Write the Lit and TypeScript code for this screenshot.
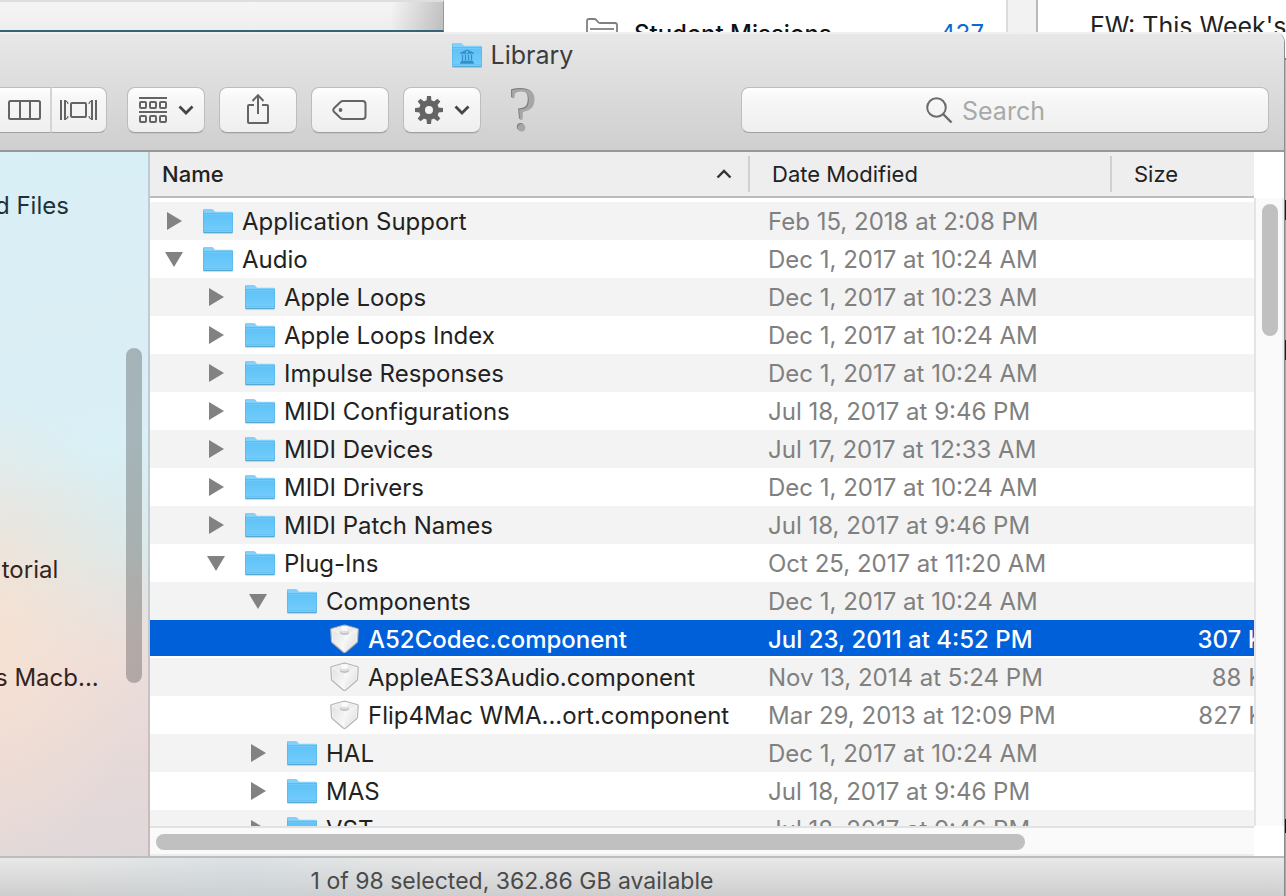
import { LitElement, html, css, svg, nothing } from "lit";
import { customElement, property } from "lit/decorators.js";

interface Entry {
  name: string;
  date: string;
  level: number;
  kind: "closed" | "open" | "component";
  size?: string;
  selected?: boolean;
}

const ENTRIES: Entry[] = [
  { name: "Application Support", date: "Feb 15, 2018 at 2:08 PM", level: 0, kind: "closed" },
  { name: "Audio", date: "Dec 1, 2017 at 10:24 AM", level: 0, kind: "open" },
  { name: "Apple Loops", date: "Dec 1, 2017 at 10:23 AM", level: 1, kind: "closed" },
  { name: "Apple Loops Index", date: "Dec 1, 2017 at 10:24 AM", level: 1, kind: "closed" },
  { name: "Impulse Responses", date: "Dec 1, 2017 at 10:24 AM", level: 1, kind: "closed" },
  { name: "MIDI Configurations", date: "Jul 18, 2017 at 9:46 PM", level: 1, kind: "closed" },
  { name: "MIDI Devices", date: "Jul 17, 2017 at 12:33 AM", level: 1, kind: "closed" },
  { name: "MIDI Drivers", date: "Dec 1, 2017 at 10:24 AM", level: 1, kind: "closed" },
  { name: "MIDI Patch Names", date: "Jul 18, 2017 at 9:46 PM", level: 1, kind: "closed" },
  { name: "Plug-Ins", date: "Oct 25, 2017 at 11:20 AM", level: 1, kind: "open" },
  { name: "Components", date: "Dec 1, 2017 at 10:24 AM", level: 2, kind: "open" },
  { name: "A52Codec.component", date: "Jul 23, 2011 at 4:52 PM", level: 3, kind: "component", size: "307 KB", selected: true },
  { name: "AppleAES3Audio.component", date: "Nov 13, 2014 at 5:24 PM", level: 3, kind: "component", size: "88 KB" },
  { name: "Flip4Mac WMA...ort.component", date: "Mar 29, 2013 at 12:09 PM", level: 3, kind: "component", size: "827 KB" },
  { name: "HAL", date: "Dec 1, 2017 at 10:24 AM", level: 2, kind: "closed" },
  { name: "MAS", date: "Jul 18, 2017 at 9:46 PM", level: 2, kind: "closed" },
  { name: "VST", date: "Jul 18, 2017 at 9:46 PM", level: 2, kind: "closed" },
];

const folderIcon = (library = false) => html`
  <svg class="icon" width="32" height="28" viewBox="0 0 32 28" aria-hidden="true">
    <defs>
      <linearGradient id="f" x1="0" y1="0" x2="0" y2="1">
        <stop offset="0" stop-color="#5fc2f6" />
        <stop offset="1" stop-color="#74cefb" />
      </linearGradient>
    </defs>
    <path d="M1.500 26.500h29" stroke="#000" stroke-opacity=".14" />
    <path d="M1 3.200Q1 2 2.200 2h7.600q.9 0 1.500.7l1.300 1.500q.5.600 1.400.600h15.800q1.200 0 1.200 1.200V25q0 1-1 1H2q-1 0-1-1z" fill="#80d2fc" />
    <path d="M1 7.500h30V25q0 1-1 1H2q-1 0-1-1z" fill="url(#f)" />
    <path d="M1 6.500h30" stroke="#55b3e4" stroke-opacity=".75" />
    <path d="M1 23.500h30" stroke="#60bcec" stroke-opacity=".6" />
    <path d="M1.500 25.500h29" stroke="#56a9d4" />
    <path d="M1.500 3V25M30.500 6V25" stroke="#4fb0e4" stroke-opacity=".5" fill="none" />
    ${library
      ? svg`<path d="M16 8.500l7 3.300v.9H9v-.9z" fill="#338fca"/>
            <circle cx="16" cy="11" r="1" fill="#74cbf8"/>
            <path d="M11.500 13.500v6M14.500 13.500v6M17.500 13.500v6M20.500 13.500v6" stroke="#338fca" stroke-width="1.300"/>
            <path d="M10 20.500h12M9 22h14" stroke="#338fca" stroke-width="1.400"/>`
      : nothing}
  </svg>`;

const componentIcon = html`
  <svg class="icon" width="32" height="30" viewBox="0 0 32 30" aria-hidden="true">
    <defs>
      <linearGradient id="l" x1="0" y1="0" x2="1" y2="1">
        <stop offset="0" stop-color="#e2e2e2" />
        <stop offset="1" stop-color="#fcfcfc" />
      </linearGradient>
      <linearGradient id="r" x1="0" y1="0" x2="1" y2="1">
        <stop offset="0" stop-color="#ffffff" />
        <stop offset="1" stop-color="#dcdcdc" />
      </linearGradient>
    </defs>
    <path d="M2.800 5.500Q3 4.800 4 4.500L14.500 1.500q2-.6 4 0L29 4.500q1 .3 1.200 1L29.500 17q0 1.200-1.200 2L17.800 28q-1.300 1-2.600 0L4.700 19q-1.200-.8-1.200-2z" fill="#f4f4f4" stroke="#b4b4b4" stroke-width="1.200" />
    <path d="M4.200 6.500L16.500 12V27L5.600 18.200q-.6-.4-.6-1.200z" fill="url(#l)" />
    <path d="M28.800 6.500L16.500 12V27L27.400 18.200q.6-.4.600-1.200z" fill="url(#r)" />
    <path d="M4.800 5.800L16.500 2.200L28.200 5.800L16.500 11.500z" fill="#ececec" />
    <path d="M12 7.500v2.200q4.500 2.600 9 0V7.500z" fill="#c4c4c4" />
    <ellipse cx="16.500" cy="7.500" rx="4.500" ry="1.700" fill="#dedede" />
    <path d="M13.500 2.500h6v4.400h-6z" fill="#fbfbfb" />
  </svg>`;

const chevron = html`
  <svg class="chevron" width="16" height="12" viewBox="0 0 16 12" aria-hidden="true">
    <path d="M1.500 2.500L8 9L14.500 2.500" fill="none" stroke="#454545" stroke-width="2.800" />
  </svg>`;

const GEAR_TEETH = [0, 45, 90, 135, 180, 225, 270, 315];

@customElement("finder-toolbar")
export class FinderToolbar extends LitElement {
  static styles = css`
    :host {
      display: block;
      background: linear-gradient(#e8e8e8, #cfcfcf);
      border-bottom: 2px solid #999;
      box-shadow: inset 0 2px 0 #f0f0f0;
    }
    .title {
      display: flex;
      align-items: center;
      justify-content: center;
      gap: 8px;
      height: 46px;
      margin: 0;
      font-size: 25px;
      font-weight: 400;
      line-height: 46px;
      color: #3c3c3c;
    }
    .tools {
      display: flex;
      align-items: center;
      gap: 14px;
      padding: 9px 15px 17px var(--offscreen);
    }
    .button,
    .segment {
      box-sizing: border-box;
      flex: none;
      display: flex;
      align-items: center;
      justify-content: center;
      height: 46px;
      padding: 0;
      border: 1px solid #bdbdbd;
      border-bottom-color: #a0a0a0;
      background: linear-gradient(#fefefe, #f7f7f7 24%, #efefef);
      font: inherit;
    }
    .button {
      width: 78px;
      border-radius: 8px;
      box-shadow: 0 1px 0 #c4c4c4;
      gap: 11px;
    }
    .views {
      display: flex;
      flex: none;
      margin-right: 6px;
    }
    .segment {
      width: 52px;
      border-left: 0;
      border-right: 2px solid #d4d4d4;
    }
    .segment.last {
      width: 55px;
      border-right: 1px solid #bdbdbd;
      border-radius: 0 8px 8px 0;
    }
    .help {
      flex: none;
      width: 56px;
      height: 46px;
      padding: 0;
      border: 0;
      background: none;
      font-family: "Liberation Serif", serif;
      font-size: 64px;
      line-height: 40px;
      color: #a6a6a6;
      text-shadow: -1px -1px 0 #7c7c7c;
    }
    .search {
      box-sizing: border-box;
      flex: 1;
      min-width: 0;
      display: flex;
      align-items: center;
      gap: 9px;
      height: 46px;
      margin-left: 176px;
      padding-left: 184px;
      border: 1px solid #bdbdbd;
      border-bottom-color: #a0a0a0;
      border-radius: 8px;
      background: linear-gradient(#fefefe, #f7f7f7 24%, #efefef);
    }
    .glass {
      flex: none;
    }
    .field {
      flex: 1;
      min-width: 0;
      padding: 2px 0 0;
      border: 0;
      outline: 0;
      background: none;
      font: inherit;
      font-size: 25px;
      color: #333;
    }
    .field::placeholder {
      color: #a9a9a9;
      opacity: 1;
    }
  `;

  render() {
    return html`
      <h1 class="title">${folderIcon(true)}<span>Library</span></h1>
      <div class="tools">
        <div class="views">
          <button class="segment" aria-label="Column view">
            <svg width="34" height="22" viewBox="0 0 34 22" fill="none" stroke="#646464" stroke-width="2">
              <rect x="1" y="2" width="31" height="18" rx="1.500" />
              <path d="M12 2v18M22 2v18" />
            </svg>
          </button>
          <button class="segment last" aria-label="Cover flow view">
            <svg width="38" height="22" viewBox="0 0 38 22" fill="none" stroke="#646464" stroke-width="2">
              <rect x="11" y="4" width="15" height="14" rx="1" />
              <path d="M1 1v20M36 1v20M5 1v20M32 1v20" />
              <path d="M6 2q2 1 2 3M6 20q2-1 2-3M31 2q-2 1-2 3M31 20q-2-1-2-3" stroke-width="1.200" />
            </svg>
          </button>
        </div>
        <button class="button" aria-label="Arrange">
          <svg width="28" height="28" viewBox="0 0 28 28" fill="none" stroke="#646464" stroke-width="2">
            <path d="M0 2h28M0 16h28" />
            ${[5, 19].map((y) => [0, 10, 20].map((x) => svg`<rect x=${x + 1} y=${y + 1} width="6" height="6" rx="1"/>`))}
          </svg>
          ${chevron}
        </button>
        <button class="button" aria-label="Share">
          <svg width="24" height="34" viewBox="0 0 24 34" fill="none" stroke="#646464" stroke-width="2">
            <path d="M8 12H3q-1 0-1 1V29q0 1 1 1H21q1 0 1-1V13q0-1-1-1H16" />
            <path d="M12 21V3M6.500 8L12 2.200L17.500 8" />
          </svg>
        </button>
        <button class="button" aria-label="Edit tags">
          <svg width="36" height="22" viewBox="0 0 36 22" fill="none" stroke="#646464" stroke-width="2">
            <path d="M11 2H30.500q3 0 3 3V17q0 3-3 3H11q-1.500 0-2.500-1L2 12.700q-1.500-1.700 0-3.400L8.500 3q1-1 2.500-1z" />
            <circle cx="8.500" cy="11" r="1.900" fill="#646464" stroke="none" />
          </svg>
        </button>
        <button class="button" aria-label="Action">
          <svg width="28" height="28" viewBox="0 0 28 28">
            <circle cx="14" cy="14" r="7" fill="none" stroke="#646464" stroke-width="6" />
            ${GEAR_TEETH.map(
              (a) => svg`<path d="M11.500 5L12 0H16L16.500 5z" fill="#646464" transform=${`rotate(${a} 14 14)`}/>`,
            )}
          </svg>
          ${chevron}
        </button>
        <button class="help" aria-label="Help">?</button>
        <label class="search">
          <svg class="glass" width="27" height="27" viewBox="0 0 27 27" fill="none" stroke="#6b6b6b" stroke-width="2" role="img" aria-label="Search">
            <circle cx="10.500" cy="10.500" r="9.300" />
            <path d="M17 17L25.500 25.500" stroke-width="2.400" />
          </svg>
          <input class="field" type="search" placeholder="Search" />
        </label>
      </div>
    `;
  }
}

@customElement("finder-sidebar")
export class FinderSidebar extends LitElement {
  static styles = css`
    :host {
      box-sizing: border-box;
      display: flex;
      width: calc(var(--offscreen) + 150px);
      padding-left: var(--offscreen);
      border-right: 2px solid rgba(60, 50, 60, 0.18);
      background:
        radial-gradient(170px 240px at 240px 480px, rgba(248, 224, 208, 0.95), rgba(248, 224, 208, 0)),
        linear-gradient(168deg, #d8f0f7 0%, #daeef4 30%, #d9f0f6 47%, #dceaea 60%, #ecdedb 74%, #e6d9d8 86%, #dfd8da 100%);
    }
    .places {
      flex: 1;
      min-width: 0;
      margin: 0 0 0 -5px;
      padding: 40px 0 0;
      list-style: none;
      white-space: nowrap;
    }
    .place {
      height: 28px;
      line-height: 28px;
      font-size: 24px;
    }
    .link {
      color: #1e3238;
      text-decoration: none;
    }
    .devices {
      margin-top: 336px;
    }
    .shared {
      margin-top: 80px;
    }
    .devices .link,
    .shared .link {
      color: #33241f;
    }
    .track {
      width: 16px;
      padding: 196px 6px 173px 0;
    }
    .thumb {
      height: 100%;
      border-radius: 8px;
      background: rgba(60, 60, 60, 0.33);
    }
  `;

  render() {
    return html`
      <ul class="places">
        <li class="place"><a class="link" href="#files">d Files</a></li>
        <li class="place devices"><a class="link" href="#torial">&nbsp;torial</a></li>
        <li class="place shared"><a class="link" href="#macbook">s Macb...</a></li>
      </ul>
      <div class="track"><div class="thumb"></div></div>
    `;
  }
}

@customElement("finder-list")
export class FinderList extends LitElement {
  @property({ attribute: false }) entries: Entry[] = [];

  static styles = css`
    :host {
      display: flex;
      flex: 1;
      min-width: 0;
      background: #fff;
    }
    .main,
    .side {
      display: flex;
      flex-direction: column;
      min-width: 0;
    }
    .main {
      flex: 1;
    }
    .viewport {
      flex: 1;
      min-height: 0;
      overflow: hidden;
    }
    .files {
      width: calc(100% + 48px);
      table-layout: fixed;
      border-spacing: 0;
      font-size: 24px;
      line-height: 36px;
      white-space: nowrap;
    }
    .files tbody::before {
      content: "";
      display: table-row;
      height: 4px;
    }
    .date-col {
      width: 362px;
    }
    .size-col {
      width: 190px;
    }
    .head {
      height: 44px;
      padding: 0;
      border-bottom: 2px solid #bcbcbc;
      background: #eee;
    }
    .sort {
      box-sizing: border-box;
      display: flex;
      align-items: center;
      justify-content: space-between;
      width: 100%;
      height: 36px;
      padding: 0 16px 0 22px;
      border: 0;
      border-right: 2px solid #d0d0d0;
      background: none;
      font: inherit;
      font-size: 22px;
      font-weight: 400;
      color: #222;
    }
    .sort.active {
      padding-left: 12px;
      font-weight: 500;
    }
    .sort.end {
      border-right: 0;
    }
    .row:nth-child(odd) {
      background: #f3f3f3;
    }
    .cell {
      height: 36px;
      padding: 2px 0 0;
      color: #808080;
    }
    .cell.title {
      height: 38px;
      padding: 0;
    }
    .name {
      display: flex;
      align-items: center;
      height: 38px;
      color: #222;
    }
    .disclosure {
      display: flex;
      width: 18px;
      height: 18px;
      margin-right: 19px;
      padding: 0;
      border: 0;
      background: none;
    }
    .label {
      margin-left: 8px;
      padding-top: 2px;
    }
    .cell.date {
      padding-left: 18px;
    }
    .cell.size {
      padding-right: 22px;
      text-align: right;
    }
    .row.selected .cell {
      background: #0060d9;
      box-shadow: inset 0 -2px 0 #fff;
      color: #fff;
      font-weight: 500;
    }
    .row.selected .name {
      color: #fff;
    }
    .track-x {
      box-sizing: border-box;
      height: 30px;
      padding: 6px;
      border-top: 2px solid #e2e2e2;
      border-bottom: 2px solid #ececec;
      background: #fafafa;
    }
    .thumb-x {
      width: 79.600%;
      height: 16px;
      border-radius: 8px;
      background: #c0c0c0;
    }
    .side {
      width: 30px;
      padding: 46px 0 30px;
      box-sizing: border-box;
    }
    .track-y {
      flex: 1;
      padding: 6px;
      border-left: 2px solid #e4e4e4;
      border-right: 2px solid #eee;
      background: #fafafa;
    }
    .thumb-y {
      width: 16px;
      height: 21.400%;
      margin: 0 auto;
      border-radius: 8px;
      background: #c0c0c0;
    }
  `;

  private lead(entry: Entry) {
    if (entry.kind === "component") {
      return html`<span class="disclosure"></span>${componentIcon}`;
    }
    const open = entry.kind === "open";
    return html`
      <button class="disclosure" aria-label=${open ? "Collapse" : "Expand"} aria-expanded=${open}>
        <svg width="18" height="18" viewBox="0 0 18 18">
          <path d=${open ? "M0 2H18L9 17z" : "M2 0L17 9L2 18z"} fill="#828282" />
        </svg>
      </button>
      ${folderIcon()}
    `;
  }

  render() {
    return html`
      <div class="main">
        <div class="viewport">
          <table class="files">
            <colgroup>
              <col />
              <col class="date-col" />
              <col class="size-col" />
            </colgroup>
            <thead>
              <tr>
                <th class="head" scope="col" aria-sort="ascending">
                  <button class="sort active">
                    Name
                    <svg width="16" height="12" viewBox="0 0 16 12" aria-hidden="true">
                      <path d="M1.500 9.500L8 3L14.500 9.500" fill="none" stroke="#333" stroke-width="2.400" />
                    </svg>
                  </button>
                </th>
                <th class="head" scope="col"><button class="sort">Date Modified</button></th>
                <th class="head" scope="col"><button class="sort end">Size</button></th>
              </tr>
            </thead>
            <tbody>
              ${this.entries.map(
                (e) => html`
                  <tr class="row ${e.selected ? "selected" : ""}">
                    <td class="cell title">
                      <div class="name" style="padding-left:${15 + e.level * 42}px">
                        ${this.lead(e)}<span class="label">${e.name}</span>
                      </div>
                    </td>
                    <td class="cell date">${e.date}</td>
                    <td class="cell size">${e.size ?? nothing}</td>
                  </tr>
                `,
              )}
            </tbody>
          </table>
        </div>
        <div class="track-x"><div class="thumb-x"></div></div>
      </div>
      <div class="side">
        <div class="track-y"><div class="thumb-y"></div></div>
      </div>
    `;
  }
}

@customElement("app-root")
export class AppRoot extends LitElement {
  static styles = css`
    :host {
      --offscreen: 260px;
      display: flex;
      flex-direction: column;
      height: 100vh;
      overflow: hidden;
      background: #fff;
      font-family: Inter, "Liberation Sans", sans-serif;
      color: #222;
    }
    .behind {
      display: flex;
      flex: none;
      height: 32px;
      overflow: hidden;
      white-space: nowrap;
      font-size: 24px;
    }
    .desktop {
      box-sizing: border-box;
      width: 444px;
      border-top: 2px solid #dedede;
      border-bottom: 2px solid #33647a;
      border-right: 1px solid #999;
      background:
        linear-gradient(90deg, rgba(0, 0, 0, 0) 390px, rgba(0, 0, 0, 0.2)),
        linear-gradient(#f5f5f5, #eee);
    }
    .mailboxes {
      box-sizing: border-box;
      flex: 1;
      display: flex;
      gap: 16px;
      padding: 17px 22px 0 142px;
      border-right: 2px solid #dcdcdc;
      line-height: 34px;
      font-weight: 500;
      color: #111;
    }
    .count {
      margin-left: auto;
      color: #0a69d6;
      font-weight: 400;
    }
    .gutter {
      width: 28px;
      border-right: 2px solid #bababa;
      background: #f2f2f2;
    }
    .message {
      box-sizing: border-box;
      width: 248px;
      padding: 9px 0 0 52px;
      font-size: 25px;
      line-height: 34px;
      color: #222;
    }
    .stage {
      flex: 1;
      min-height: 0;
      display: flex;
      background: linear-gradient(#fff 26px, #777 26px 28px, #bdbdbd 28px 168px, #1a1a1a 168px 188px, #a8a8a8 188px 308px, #1a1a1a 308px 328px, #a8a8a8 328px 787px, #111 787px 801px, #a8a8a8 801px);
    }
    .window {
      box-sizing: border-box;
      flex: 1;
      min-width: 0;
      display: flex;
      flex-direction: column;
      margin-left: calc(-1 * var(--offscreen));
      margin-right: 1px;
      border-right: 1px solid #8c8c8c;
      border-top-right-radius: 10px;
      overflow: hidden;
    }
    .body {
      flex: 1;
      min-height: 0;
      display: flex;
    }
    .status {
      flex: none;
      height: 38px;
      border-top: 2px solid #bdbdbd;
      background:
        linear-gradient(90deg, rgba(200, 215, 222, 0) 320px, rgba(200, 215, 222, 0.4) 500px, rgba(200, 215, 222, 0) 700px),
        linear-gradient(#e8e8e8, #cecece);
      font-size: 23px;
      line-height: 46px;
      text-align: center;
      color: #4a4a4a;
    }
  `;

  render() {
    return html`
      <div class="behind">
        <div class="desktop"></div>
        <div class="mailboxes">
          <svg width="32" height="26" viewBox="0 0 32 26" fill="none" stroke="#808084" stroke-width="1.800">
            <path d="M1 25V4q0-2 2-2h5.500q1 0 1.700.8l2 2.400q.6.800 1.800.800H29q2 0 2 2V25" />
            <path d="M4 12h24" />
          </svg>
          <span>Student Missions</span>
          <span class="count">437</span>
        </div>
        <div class="gutter"></div>
        <div class="message">FW: This Week's</div>
      </div>
      <div class="stage">
        <div class="window">
          <finder-toolbar></finder-toolbar>
          <div class="body">
            <finder-sidebar></finder-sidebar>
            <finder-list .entries=${ENTRIES}></finder-list>
          </div>
          <footer class="status">1 of 98 selected, 362.86 GB available</footer>
        </div>
      </div>
    `;
  }
}
